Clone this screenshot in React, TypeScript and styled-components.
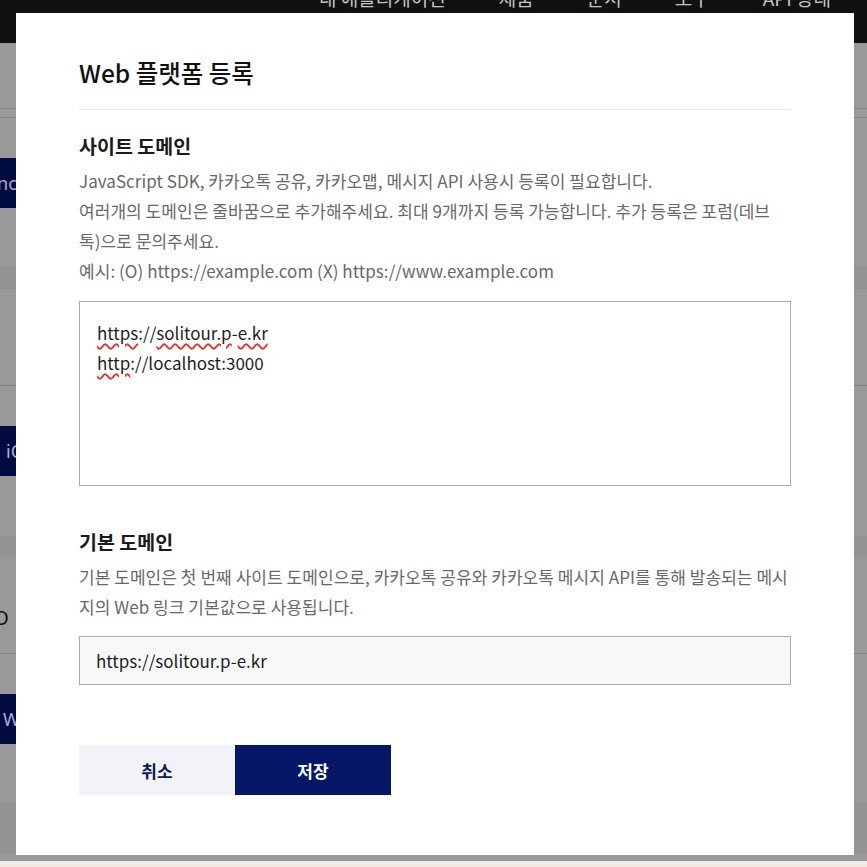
import React from "react";
import styled, { createGlobalStyle } from "styled-components";

const Global = createGlobalStyle`
  html, body { margin: 0; padding: 0; }
  body {
    background: #f4e8e3;
    font-family: "Noto Sans CJK KR", "Noto Sans", sans-serif;
    overflow: hidden;
  }
  * { box-sizing: border-box; }
`;

const Page = styled.div`
  height: 861px;
  background: #999999;
  display: flex;
  flex-direction: column;
  overflow: hidden;
`;

const Header = styled.header`
  height: 43px;
  flex: none;
  background: #111111;
  display: flex;
  justify-content: flex-end;
  padding-right: 36px;
  overflow: hidden;
`;

const Nav = styled.nav`
  display: flex;
  gap: 53px;
  margin-top: -14px;
  height: 24px;
  line-height: 24px;
  font-size: 19px;
  color: #c4c4c4;
`;

const Row = styled.div<{ $h: number; $line?: boolean; $band?: boolean }>`
  height: ${(p) => p.$h}px;
  flex: none;
  background: ${(p) => (p.$band ? "#949494" : "transparent")};
  border-bottom: ${(p) => (p.$line ? "1px solid #878787" : "none")};
  display: flex;
  flex-direction: column;
  overflow: hidden;
`;

const SideButton = styled.div<{ $indent: number }>`
  width: 160px;
  height: 50px;
  margin-top: 40px;
  margin-left: -40px;
  background: #020b40;
  color: #a7b0cc;
  font-size: 18px;
  line-height: 50px;
  padding-left: ${(p) => p.$indent}px;
  white-space: nowrap;
  font-family: "Noto Sans", sans-serif;
`;

const SideText = styled.div`
  margin-left: -12px;
  margin-top: 49px;
  font-size: 20px;
  line-height: 26px;
  color: #111;
  font-family: "Noto Sans", sans-serif;
`;

const Modal = styled.div`
  position: fixed;
  left: 16px;
  top: 13px;
  width: 838px;
  height: 842px;
  background: #ffffff;
  padding: 42px 63px 60px;
  display: flex;
  flex-direction: column;
`;

const Title = styled.h2`
  margin: 0;
  padding-bottom: 18px;
  border-bottom: 1px solid #e4e4e4;
  font-size: 24.5px;
  line-height: 36px;
  font-weight: 500;
  color: #111;
`;

const Section = styled.section<{ $top: number }>`
  margin-top: ${(p) => p.$top}px;
  display: flex;
  flex-direction: column;
`;

const SectionTitle = styled.h3`
  margin: 0;
  font-size: 19.5px;
  line-height: 28px;
  font-weight: 700;
  color: #1a1a1a;
`;

const Desc = styled.p`
  margin: 6px 0 0;
  font-size: 17px;
  line-height: 30px;
  letter-spacing: 0.05px;
  color: #686868;
`;

const DomainBox = styled.div`
  margin-top: 15px;
  height: 185px;
  border: 1px solid #acacac;
  padding: 16px 17px;
  font-size: 17px;
  line-height: 30px;
  color: #1e1e1e;
`;

const Typo = styled.span`
  text-decoration: underline wavy #e8322f;
  text-decoration-thickness: 1.5px;
  text-underline-offset: 3px;
`;

const InputBox = styled.div`
  margin-top: 14px;
  height: 49px;
  border: 1px solid #acacac;
  background: #f7f8f8;
  padding: 0 16px;
  display: flex;
  align-items: center;
  font-size: 17px;
  color: #1e1e1e;
`;

const Buttons = styled.div`
  margin-top: 60px;
  display: flex;
`;

const Btn = styled.button<{ $primary?: boolean }>`
  width: 156px;
  height: 50px;
  border: none;
  font-family: inherit;
  font-size: 17px;
  font-weight: 700;
  cursor: pointer;
  background: ${(p) => (p.$primary ? "#051766" : "#f2f3f8")};
  color: ${(p) => (p.$primary ? "#ffffff" : "#0c1a55")};
`;

export default function App() {
  return (
    <>
      <Global />
      <Page>
        <Header>
          <Nav>
            <span>내 애플리케이션</span>
            <span>제품</span>
            <span>문서</span>
            <span>도구</span>
            <span>API 상태</span>
          </Nav>
        </Header>
        <Row $h={66} $line />
        <Row $h={9} $line />
        <Row $h={149}>
          <SideButton $indent={18}>Sync</SideButton>
        </Row>
        <Row $h={22} $band />
        <Row $h={97} $line />
        <Row $h={150}>
          <SideButton $indent={46}>iOS</SideButton>
        </Row>
        <Row $h={20} $band />
        <Row $h={98} $line>
          <SideText>iO</SideText>
        </Row>
        <Row $h={149}>
          <SideButton $indent={43}>Web</SideButton>
        </Row>
        <Row $h={50} $band />
      </Page>
      <Modal>
        <Title>Web 플랫폼 등록</Title>
        <Section $top={22}>
          <SectionTitle>사이트 도메인</SectionTitle>
          <Desc>
            JavaScript SDK, 카카오톡 공유, 카카오맵, 메시지 API 사용시 등록이 필요합니다.
            <br />
            여러개의 도메인은 줄바꿈으로 추가해주세요. 최대 9개까지 등록 가능합니다. 추가 등록은 포럼(데브톡)으로 문의주세요.
            <br />
            예시: (O) https://example.com (X) https://www.example.com
          </Desc>
          <DomainBox>
            <div>
              <Typo>https</Typo>://<Typo>solitour.p</Typo>-<Typo>e.kr</Typo>
            </div>
            <div>
              <Typo>http</Typo>://localhost:3000
            </div>
          </DomainBox>
        </Section>
        <Section $top={42}>
          <SectionTitle>기본 도메인</SectionTitle>
          <Desc>
            기본 도메인은 첫 번째 사이트 도메인으로, 카카오톡 공유와 카카오톡 메시지 API를 통해 발송되는 메시지의 Web 링크 기본값으로 사용됩니다.
          </Desc>
          <InputBox>https://solitour.p-e.kr</InputBox>
        </Section>
        <Buttons>
          <Btn>취소</Btn>
          <Btn $primary>저장</Btn>
        </Buttons>
      </Modal>
    </>
  );
}
